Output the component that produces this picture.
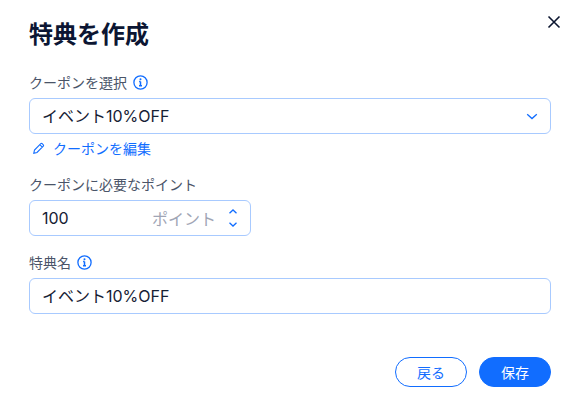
<div class="dialog">
    <button class="close" aria-label="閉じる">
        <svg width="14" height="14" viewBox="0 0 14 14"><path d="M1.5 1.5l11 11M12.5 1.5l-11 11" /></svg>
    </button>
    <h1>特典を作成</h1>

    <div class="field first">
        <div class="label">
            <span>クーポンを選択</span>
            <svg class="info" width="15" height="15" viewBox="0 0 15 15">
                <circle cx="7.5" cy="7.5" r="6.6" />
                <path d="M7.5 6.4v4.2M6 10.8h3M6.1 6.5h1.4" />
                <circle class="dot" cx="7.5" cy="4.2" r="1" />
            </svg>
        </div>
        <div class="input">
            <span class="value">イベント10%OFF</span>
            <svg class="chev" width="12" height="7" viewBox="0 0 12 7"><path d="M1.2 1.2L6 5.6l4.8-4.4" /></svg>
        </div>
        <a class="edit" href="#edit">
            <svg width="14" height="14" viewBox="0 0 14 14"><path d="M1.8 12.2l.7-3.2 6.3-6.3a1 1 0 0 1 1.4 0l1.1 1.1a1 1 0 0 1 0 1.4L5 11.5zM7.8 3.7l2.5 2.5" /></svg>
            <span>クーポンを編集</span>
        </a>
    </div>

    <div class="field">
        <div class="label"><span>クーポンに必要なポイント</span></div>
        <div class="input short">
            <span class="value">100</span>
            <span class="unit">ポイント</span>
            <svg class="stepper" width="10" height="20" viewBox="0 0 10 20">
                <path d="M1.5 5.2L5 2l3.5 3.2M1.5 14.8L5 18l3.5-3.2" />
            </svg>
        </div>
    </div>

    <div class="field">
        <div class="label">
            <span>特典名</span>
            <svg class="info" width="15" height="15" viewBox="0 0 15 15">
                <circle cx="7.5" cy="7.5" r="6.6" />
                <path d="M7.5 6.4v4.2M6 10.8h3M6.1 6.5h1.4" />
                <circle class="dot" cx="7.5" cy="4.2" r="1" />
            </svg>
        </div>
        <div class="input"><span class="value">イベント10%OFF</span></div>
    </div>

    <div class="actions">
        <button class="btn secondary">戻る</button>
        <button class="btn primary">保存</button>
    </div>
</div>

<style>
    :global(body) {
        margin: 0;
        background: #fff;
    }

    .dialog {
        position: relative;
        box-sizing: border-box;
        width: 578px;
        height: 412px;
        padding: 19px 27px 0 29px;
        font-family: Inter, "Noto Sans CJK JP", sans-serif;
        color: #162d3d;
        display: flex;
        flex-direction: column;
    }

    .close {
        position: absolute;
        top: 15px;
        right: 17px;
        padding: 0;
        width: 14px;
        height: 14px;
        border: none;
        background: none;
        display: flex;
    }

    .close path {
        fill: none;
        stroke: #0c1630;
        stroke-width: 1.6;
    }

    h1 {
        margin: 0;
        font-size: 24px;
        line-height: 32px;
        font-weight: 700;
        color: #0c1633;
    }

    .field {
        margin-top: 16px;
    }

    .field.first {
        margin-top: 21px;
    }

    .label {
        display: flex;
        align-items: center;
        gap: 6px;
        height: 20px;
        font-size: 14px;
        color: #4a5468;
        margin-bottom: 6px;
    }

    .info circle {
        fill: none;
        stroke: #116dff;
        stroke-width: 1.3;
    }

    .info path {
        fill: none;
        stroke: #116dff;
        stroke-width: 1.5;
    }

    .info .dot {
        fill: #116dff;
        stroke: none;
    }

    .input {
        box-sizing: border-box;
        height: 36px;
        border: 1px solid #a8caff;
        border-radius: 6px;
        display: flex;
        align-items: center;
        padding: 0 12px;
        background: #fff;
    }

    .value {
        flex: 1;
        font-size: 16px;
        line-height: 32px;
        padding-bottom: 1px;
        color: #162033;
    }

    .input.short {
        width: 222px;
    }

    .chev path,
    .stepper path {
        fill: none;
        stroke: #116dff;
        stroke-width: 1.3;
    }

    .unit {
        font-size: 16px;
        color: #a0a5b5;
        margin-right: 12px;
    }

    .edit {
        display: flex;
        align-items: center;
        gap: 7px;
        margin-top: 4px;
        margin-left: 3px;
        height: 20px;
        font-size: 14px;
        color: #116dff;
        text-decoration: none;
    }

    .edit path {
        fill: none;
        stroke: #116dff;
        stroke-width: 1.1;
    }

    .actions {
        display: flex;
        justify-content: flex-end;
        gap: 12px;
        margin-top: 43px;
    }

    .btn {
        box-sizing: border-box;
        width: 72px;
        height: 30px;
        padding: 0;
        border-radius: 15px;
        border: 1px solid #116dff;
        font-family: inherit;
        font-size: 14px;
    }

    .secondary {
        background: #fff;
        color: #116dff;
    }

    .primary {
        background: #116dff;
        color: #fff;
    }
</style>
